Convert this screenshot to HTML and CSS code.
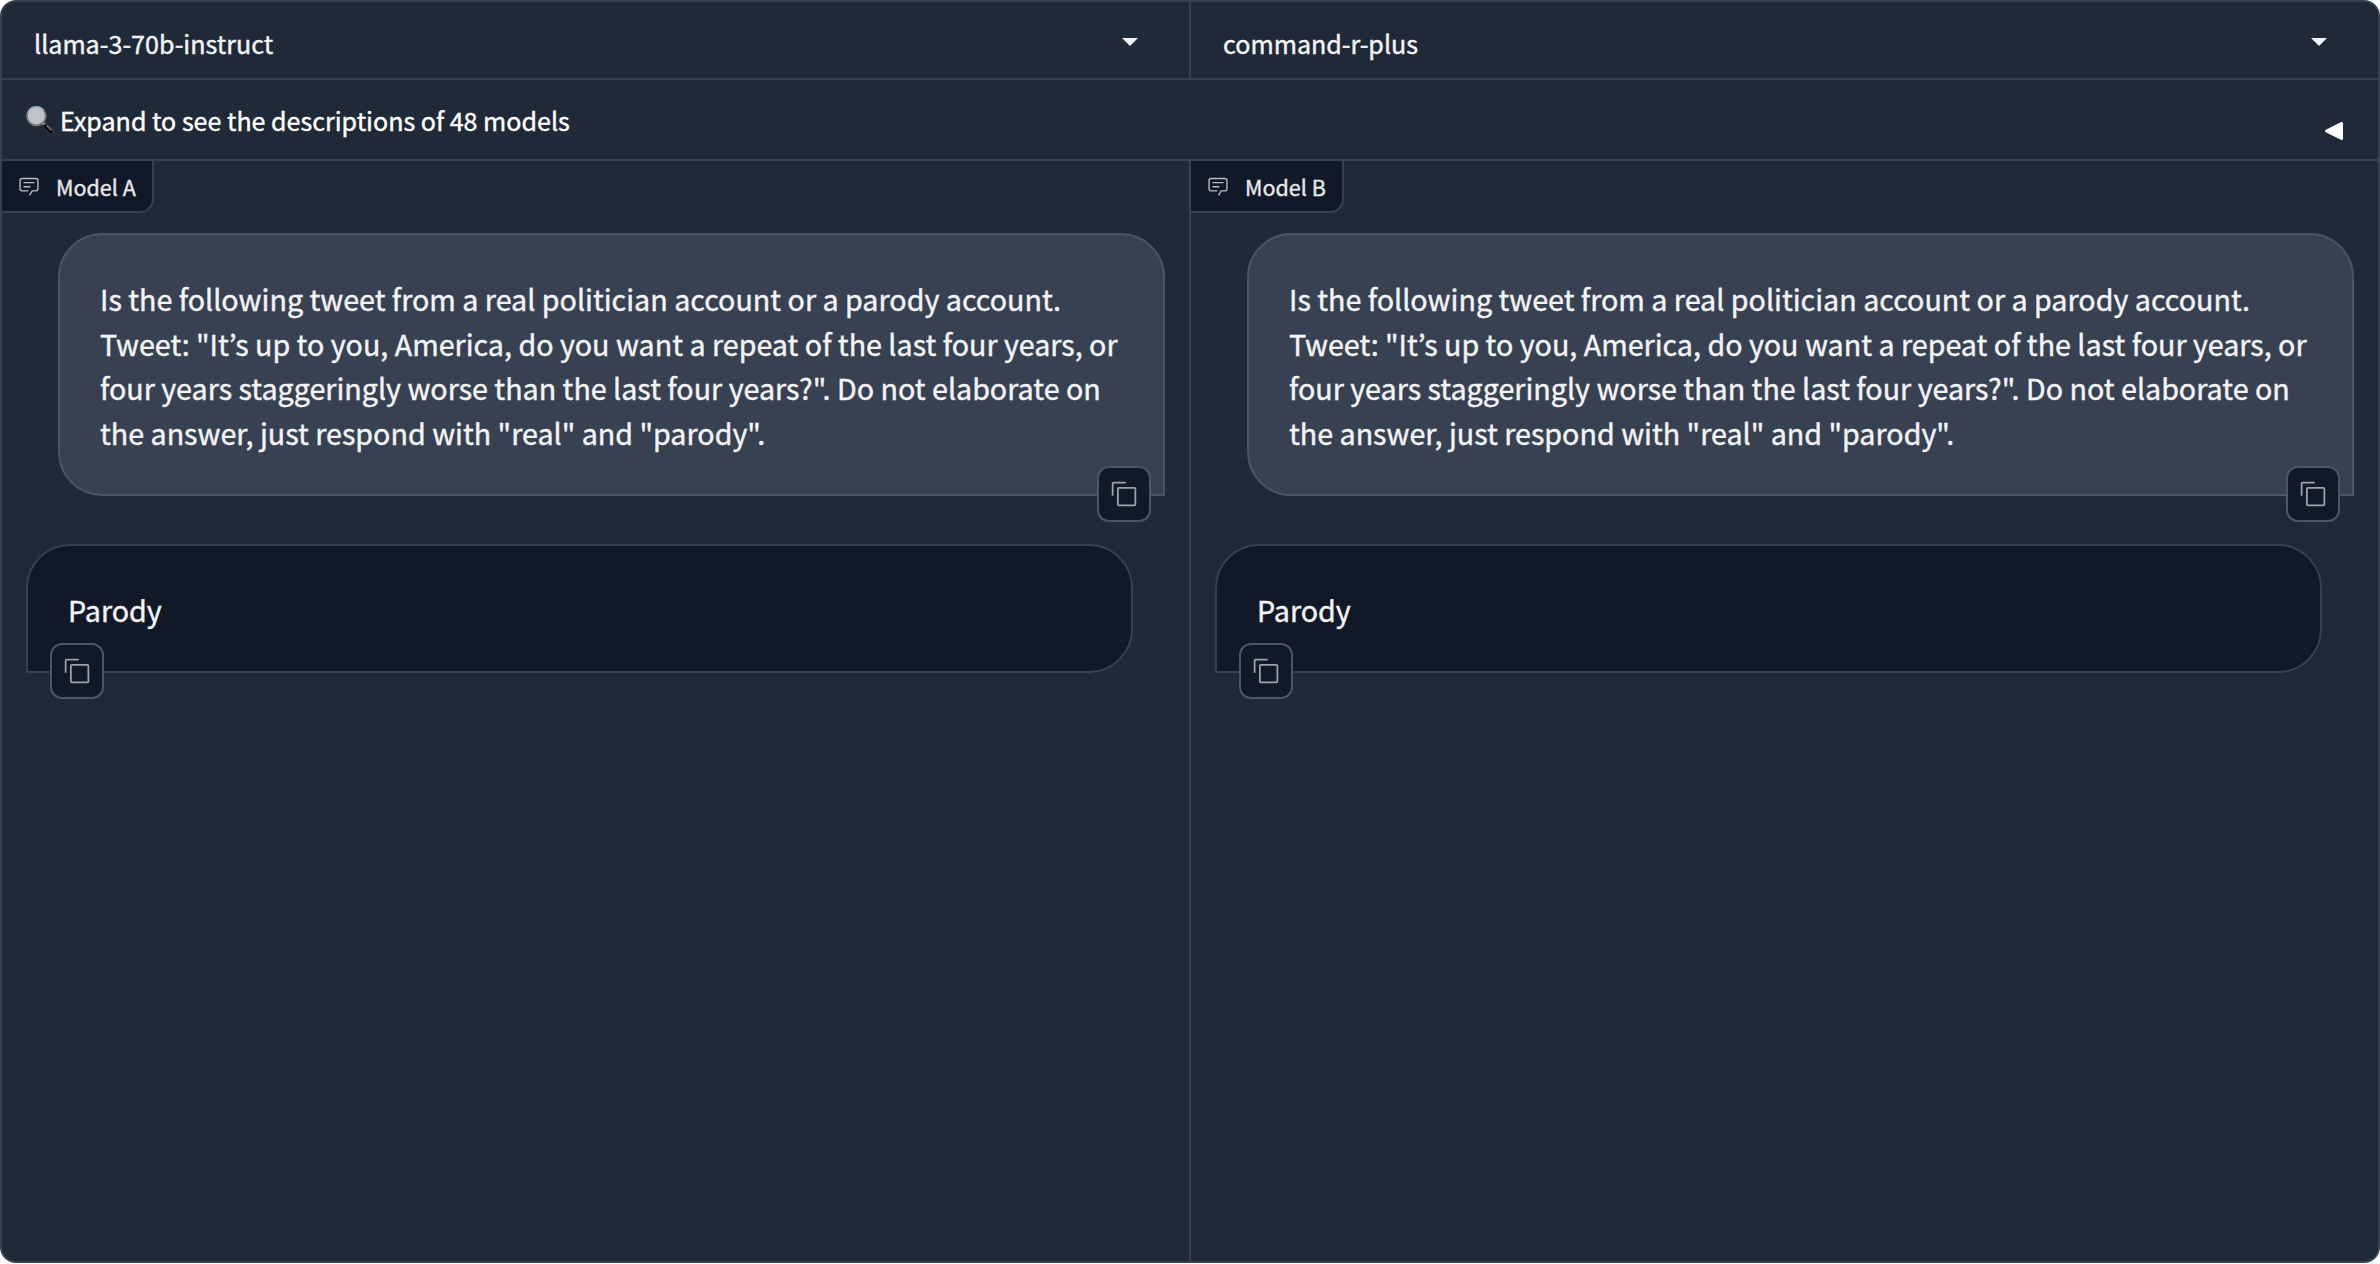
FILE: index.html
```html
<!DOCTYPE html>
<html lang="en">
<head>
<meta charset="utf-8">
<title>Model comparison</title>
<link rel="stylesheet" href="styles.css">
</head>
<body>
<svg class="defs" width="0" height="0">
  <symbol id="copy" viewBox="0 0 32 32">
    <path d="M28 10v18H10V10h18m0-2H10a2 2 0 0 0-2 2v18a2 2 0 0 0 2 2h18a2 2 0 0 0 2-2V10a2 2 0 0 0-2-2Z"/>
    <path d="M4 18H2V4a2 2 0 0 1 2-2h14v2H4Z"/>
  </symbol>
  <symbol id="chat" viewBox="0 0 32 32">
    <path d="M17.74 30L16 29l4-7h6a2 2 0 0 0 2-2V8a2 2 0 0 0-2-2H6a2 2 0 0 0-2 2v12a2 2 0 0 0 2 2h9v2H6a4 4 0 0 1-4-4V8a4 4 0 0 1 4-4h20a4 4 0 0 1 4 4v12a4 4 0 0 1-4 4h-4.84Z"/>
    <path d="M8 10h16v2H8zm0 6h10v2H8z"/>
  </symbol>
  <symbol id="caret" viewBox="0 0 16 8"><path d="M0 0h16L8 8z"/></symbol>
</svg>
<main class="arena">
  <div class="selectors">
    <div class="select"><span>llama-3-70b-instruct</span><svg class="caret"><use href="#caret"/></svg></div>
    <div class="select"><span>command-r-plus</span><svg class="caret"><use href="#caret"/></svg></div>
  </div>
  <div class="accordion">
    <svg class="lens" viewBox="0 0 28 28">
      <path d="M16.5 16.5l4 4" stroke="#9a9da2" stroke-width="2.8"/>
      <path d="M19.6 20.2l5.8 5.4" stroke="#4a4d52" stroke-width="5" stroke-linecap="round"/>
      <path d="M19.6 20.4l5.6 5.2" stroke="#060607" stroke-width="3.8" stroke-linecap="round"/>
      <path d="M20.8 20l4.6 4.2" stroke="#85888c" stroke-width="1.1" stroke-linecap="round"/>
      <ellipse cx="10.3" cy="10" rx="9.4" ry="9.4" fill="#c1c2c7" stroke="#75787c" stroke-width="1.8"/>
      <path d="M2 7.5a8.8 8.8 0 0 1 15.5-3" stroke="#9db6cc" stroke-width="1.4"/>
    </svg>
    <span class="accordion-title">Expand to see the descriptions of 48 models</span>
    <svg class="arrow" viewBox="0 0 18 18"><path d="M1.5 9L16.5 1.5v15z"/></svg>
  </div>
  <div class="panes">
    <section class="pane">
      <div class="label"><svg><use href="#chat"/></svg><span>Model A</span></div>
      <div class="bubble user">
        <p>Is the following tweet from a real politician account or a parody account.<br>Tweet: "It’s up to you, America, do you want a repeat of the last four years, or<br>four years staggeringly worse than the last four years?". Do not elaborate on<br>the answer, just respond with "real" and "parody".</p>
        <button class="copy" aria-label="Copy"><svg><use href="#copy"/></svg></button>
      </div>
      <div class="bubble bot">
        <p>Parody</p>
        <button class="copy" aria-label="Copy"><svg><use href="#copy"/></svg></button>
      </div>
    </section>
    <section class="pane">
      <div class="label"><svg><use href="#chat"/></svg><span>Model B</span></div>
      <div class="bubble user">
        <p>Is the following tweet from a real politician account or a parody account.<br>Tweet: "It’s up to you, America, do you want a repeat of the last four years, or<br>four years staggeringly worse than the last four years?". Do not elaborate on<br>the answer, just respond with "real" and "parody".</p>
        <button class="copy" aria-label="Copy"><svg><use href="#copy"/></svg></button>
      </div>
      <div class="bubble bot">
        <p>Parody</p>
        <button class="copy" aria-label="Copy"><svg><use href="#copy"/></svg></button>
      </div>
    </section>
  </div>
</main>
</body>
</html>
```
FILE: styles.css
```css
* { box-sizing: border-box; }
body {
  margin: 0;
  background: #fff;
  color: #f3f4f6;
  font-family: "Noto Sans CJK KR", "Noto Sans", sans-serif;
  -webkit-text-stroke: 0.4px currentColor;
}
.defs { position: absolute; }
.arena {
  display: flex;
  flex-direction: column;
  height: 1263px;
  border: 2px solid #384152;
  border-radius: 16px;
  background: #202937;
  overflow: hidden;
}
.selectors {
  display: grid;
  grid-template-columns: 1187px 1fr;
  height: 78px;
  border-bottom: 2px solid #384152;
}
.select {
  display: flex;
  align-items: center;
  justify-content: space-between;
  padding: 6px 51px 0 32px;
  font-size: 25.1px;
  line-height: 36px;
}
.select + .select { border-left: 2px solid #384152; }
.caret { width: 16px; height: 8px; margin-bottom: 3px; fill: #f3f4f6; }
.accordion {
  display: flex;
  align-items: center;
  height: 81px;
  padding: 0 35px 0 24px;
  border-bottom: 2px solid #384152;
  color: #fff;
  font-size: 25.05px;
  line-height: 36px;
}
.lens { width: 28px; height: 28px; margin-top: 1px; fill: none; }
.accordion-title { flex: 1; margin-left: 6px; padding-top: 1px; }
.arrow {
  width: 18px;
  height: 18px;
  margin-top: 22px;
  fill: #fff;
  stroke: #fff;
  stroke-width: 3;
  stroke-linejoin: round;
}
.panes {
  display: grid;
  grid-template-columns: 1187px 1fr;
  flex: 1;
}
.pane { display: flex; flex-direction: column; align-items: flex-start; }
.pane + .pane { border-left: 2px solid #384152; }
.label {
  display: flex;
  align-items: center;
  gap: 16px;
  height: 52px;
  padding: 1px 16px 0 16px;
  border: solid #384152;
  border-width: 0 2px 2px 0;
  border-bottom-right-radius: 14px;
  background: #111827;
  color: #e5e7eb;
  font-size: 21.5px;
  line-height: 30px;
}
.label svg { width: 22px; height: 22px; margin-bottom: 2px; fill: #b9bdc5; }
.bubble {
  position: relative;
  width: 1107px;
  padding: 42px 40px;
  border: 2px solid;
  border-radius: 44px;
  font-size: 28.66px;
  line-height: 44.6px;
  white-space: nowrap;
}
.bubble p { margin: 0; }
.user {
  height: 263px;
  margin: 20px 0 0 56px;
  border-color: #4b5563;
  border-bottom-right-radius: 0;
  background: #384152;
}
.bot {
  height: 129px;
  margin: 48px 0 0 24px;
  border-color: #384152;
  border-bottom-left-radius: 0;
  background: #111827;
}
.copy {
  position: absolute;
  bottom: -28px;
  width: 54px;
  height: 56px;
  padding: 12px 11px;
  border: 2px solid #4b5563;
  border-radius: 12px;
  background: #111827;
}
.copy svg { display: block; width: 28px; height: 28px; fill: #9ca3af; }
.user .copy { right: 12px; }
.bot .copy { left: 22px; }
```
